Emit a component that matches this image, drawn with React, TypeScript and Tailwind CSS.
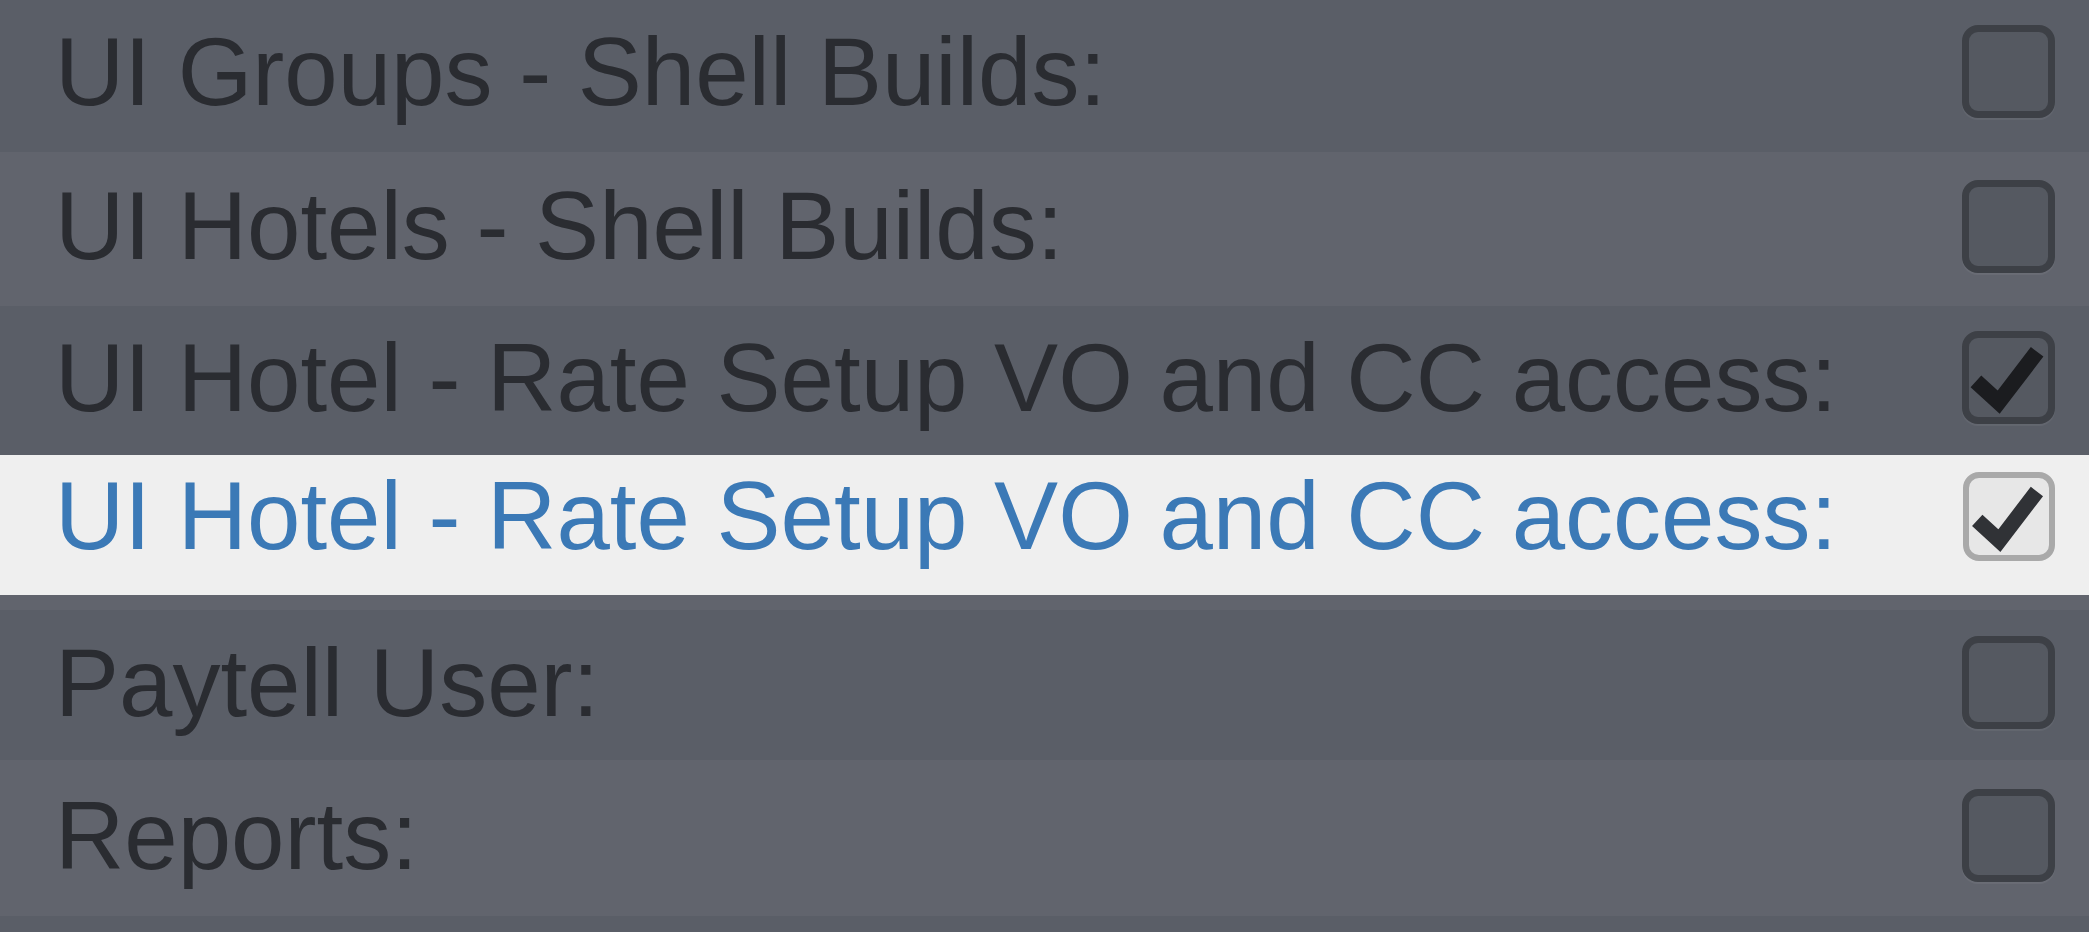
import React from "react";

type CBProps = { checked?: boolean; light?: boolean };

function Check({ color }: { color: string }) {
  return (
    <svg viewBox="0 0 80 80" className="absolute inset-0 w-full h-full" aria-hidden>
      <polyline
        points="7,44 30,65 69,14"
        fill="none"
        stroke={color}
        strokeWidth="16"
        strokeLinecap="butt"
        strokeLinejoin="miter"
      />
    </svg>
  );
}

function CheckBox({ checked, light }: CBProps) {
  if (light) {
    return (
      <div className="relative shrink-0 w-[92px] h-[89px] rounded-[16px] border-[6px] border-[#a9a9a9] bg-[#e7e7e7]">
        {checked && <Check color="#303236" />}
      </div>
    );
  }
  return (
    <div className="relative shrink-0 w-[93px] h-[93px] rounded-[16px] border-[7px] border-[#3d4046] bg-[#555961] shadow-[0_2px_1px_rgba(255,255,255,0.06)]">
      {checked && <Check color="#1b1c1f" />}
    </div>
  );
}

function Row({
  label,
  checked,
  dark,
  h,
  pb,
}: {
  label: string;
  checked?: boolean;
  dark: boolean;
  h: string;
  pb: string;
}) {
  return (
    <div
      className={`flex items-center justify-between pl-[55px] pr-[34px] ${h} ${pb} ${
        dark ? "bg-[#5a5e67]" : "bg-[#61646d]"
      }`}
    >
      <span className="text-[96px] leading-none text-[#2a2c31] whitespace-nowrap">{label}</span>
      <CheckBox checked={checked} />
    </div>
  );
}

export default function App() {
  return (
    <div className="w-full h-[932px] overflow-hidden bg-[#5a5e67] font-['Liberation_Sans',Arial,sans-serif]">
      <Row label="UI Groups - Shell Builds:" dark h="h-[152px]" pb="pb-[9px]" />
      <Row label="UI Hotels - Shell Builds:" dark={false} h="h-[154px]" pb="pb-[6px]" />
      <Row label="UI Hotel - Rate Setup VO and CC access:" checked dark h="h-[149px]" pb="pb-[6px]" />
      <div className="relative h-[155px] bg-[#61646d]">
        <div className="absolute left-0 right-0 top-0 h-[140px] bg-[#efefef] flex items-center justify-between pl-[55px] pr-[34px] pb-[18px]">
          <span className="text-[96px] leading-none text-[#3b79b6] whitespace-nowrap">
            UI Hotel - Rate Setup VO and CC access:
          </span>
          <CheckBox checked light />
        </div>
      </div>
      <Row label="Paytell User:" dark h="h-[150px]" pb="pb-[5px]" />
      <Row label="Reports:" dark={false} h="h-[156px]" pb="pb-[5px]" />
      <div className="h-[40px] bg-[#5a5e67]" />
    </div>
  );
}
